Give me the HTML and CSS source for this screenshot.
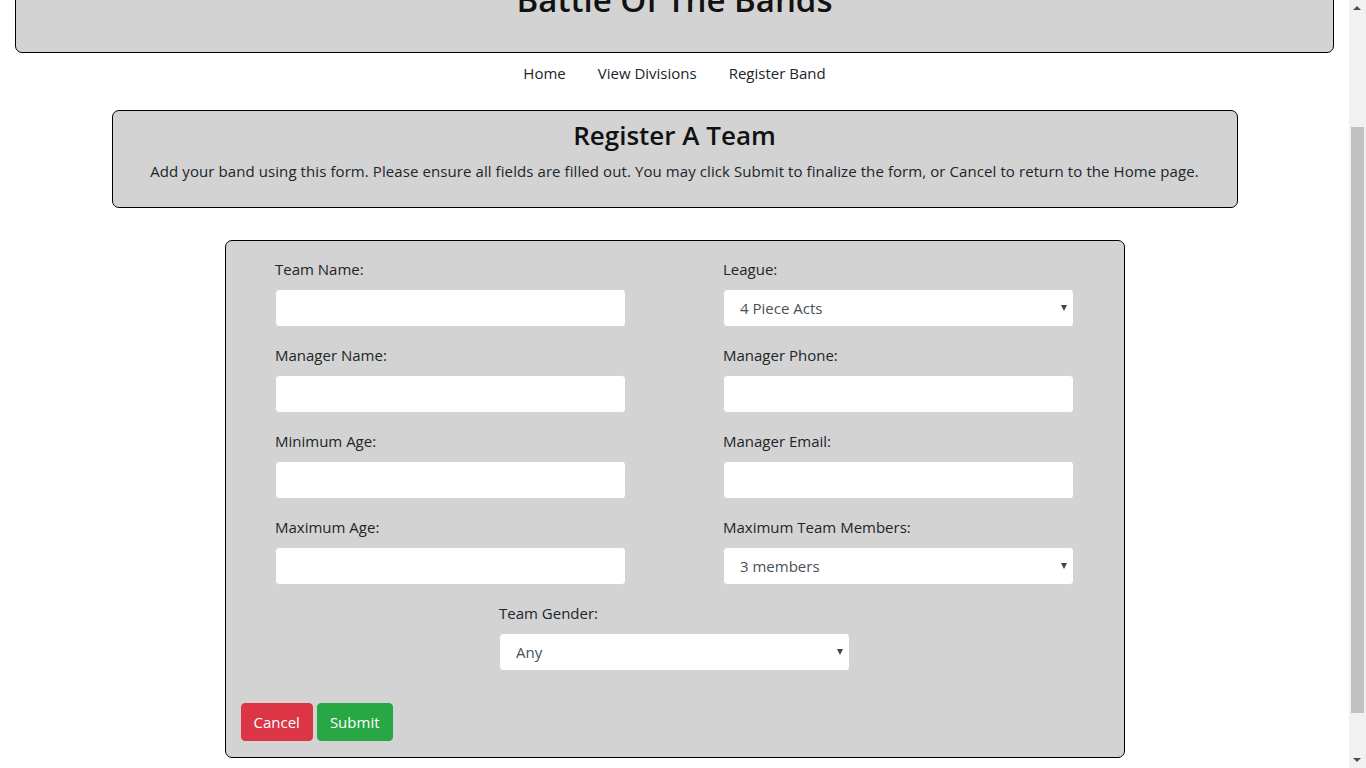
FILE: index.html
```html
<!DOCTYPE html>
<html lang="en">
<head>
<meta charset="utf-8">
<title>Battle Of The Bands - Register Band</title>
<link rel="stylesheet" href="styles.css">
</head>
<body>
<header class="site-header">
  <h1 class="site-title">Battle Of The Bands</h1>
</header>
<nav class="main-nav">
  <a class="nav-link" href="#">Home</a>
  <a class="nav-link" href="#">View Divisions</a>
  <a class="nav-link" href="#">Register Band</a>
</nav>
<main class="page">
  <section class="intro">
    <h3 class="intro-title">Register A Team</h3>
    <p class="intro-text">Add your band using this form. Please ensure all fields are filled out. You may click Submit to finalize the form, or Cancel to return to the Home page.</p>
  </section>
  <form class="team-form">
    <div class="fields">
      <div class="field">
        <label class="field-label" for="teamName">Team Name:</label>
        <input class="control" id="teamName" type="text">
      </div>
      <div class="field">
        <label class="field-label" for="league">League:</label>
        <span class="select-wrap"><select class="control select" id="league"><option>4 Piece Acts</option></select></span>
      </div>
      <div class="field">
        <label class="field-label" for="managerName">Manager Name:</label>
        <input class="control" id="managerName" type="text">
      </div>
      <div class="field">
        <label class="field-label" for="managerPhone">Manager Phone:</label>
        <input class="control" id="managerPhone" type="text">
      </div>
      <div class="field">
        <label class="field-label" for="minAge">Minimum Age:</label>
        <input class="control" id="minAge" type="text">
      </div>
      <div class="field">
        <label class="field-label" for="managerEmail">Manager Email:</label>
        <input class="control" id="managerEmail" type="text">
      </div>
      <div class="field">
        <label class="field-label" for="maxAge">Maximum Age:</label>
        <input class="control" id="maxAge" type="text">
      </div>
      <div class="field">
        <label class="field-label" for="maxMembers">Maximum Team Members:</label>
        <span class="select-wrap"><select class="control select" id="maxMembers"><option>3 members</option></select></span>
      </div>
      <div class="field field-center">
        <label class="field-label" for="gender">Team Gender:</label>
        <span class="select-wrap"><select class="control select" id="gender"><option>Any</option></select></span>
      </div>
    </div>
    <div class="actions">
      <button type="button" class="btn btn-cancel">Cancel</button>
      <button type="submit" class="btn btn-submit">Submit</button>
    </div>
  </form>
</main>
<div class="fake-scrollbar" aria-hidden="true">
  <span class="sb-arrow sb-up"></span>
  <span class="sb-track"><span class="sb-thumb"></span></span>
  <span class="sb-arrow sb-down"></span>
</div>
<script src="script.js"></script>
</body>
</html>
```

FILE: styles.css
```css
* {
  box-sizing: border-box;
}

html, body {
  margin: 0;
  padding: 0;
}

body {
  margin-right: 17px;
  font-family: "Open Sans", "Noto Sans", "Liberation Sans", sans-serif;
  font-size: 15px;
  line-height: 24px;
  color: #212529;
  background: #ffffff;
}

.site-header {
  margin: 0 15px;
  padding: 118px 0 28px;
  background: #d3d3d3;
  border: 1px solid #000;
  border-radius: 0 0 7px 7px;
  text-align: center;
}

.site-title {
  margin: 0;
  font-size: 33px;
  line-height: 48px;
  font-weight: 600;
  color: #111;
}

.main-nav {
  display: flex;
  justify-content: center;
}

.nav-link {
  display: block;
  padding: 8px 16px;
  color: #212529;
  text-decoration: none;
}

.page {
  padding-bottom: 60px;
}

.intro {
  width: 1126px;
  margin: 17px auto 0;
  padding: 8px 8px 10px;
  background: #d3d3d3;
  border: 1px solid #000;
  border-radius: 7px;
  text-align: center;
}

.intro-title {
  margin: 0 0 7px;
  font-size: 26px;
  line-height: 33px;
  font-weight: 600;
  color: #111;
}

.intro-text {
  margin: 0 0 14px;
  letter-spacing: 0.085px;
}

.team-form {
  width: 900px;
  margin: 32px auto 0;
  padding: 16px 15px 16px;
  background: #d3d3d3;
  border: 1px solid #000;
  border-radius: 7px;
}

.fields {
  display: grid;
  grid-template-columns: repeat(2, 351px);
  column-gap: 97px;
  row-gap: 16px;
  justify-content: center;
}

.field {
  display: flex;
  flex-direction: column;
}

.field-center {
  grid-column: 1 / -1;
  justify-self: center;
  width: 351px;
}

.field-label {
  margin-bottom: 8px;
  line-height: 24px;
}

.control {
  display: block;
  width: 100%;
  height: 38px;
  padding: 0 16px;
  border: 1px solid #d3d3d3;
  border-radius: 4px;
  background: #fff;
  font: inherit;
  color: #495057;
  outline: none;
}

.select-wrap {
  position: relative;
  display: block;
}

.select {
  -webkit-appearance: none;
  appearance: none;
}

.select-wrap::after {
  content: "";
  position: absolute;
  right: 7px;
  top: 16px;
  border-left: 3px solid transparent;
  border-right: 3px solid transparent;
  border-top: 6px solid #444;
  pointer-events: none;
}

.actions {
  display: flex;
  gap: 4px;
  margin-top: 32px;
}

.btn {
  height: 38px;
  padding: 0 12px;
  border: 1px solid transparent;
  border-radius: 4px;
  font: inherit;
  font-size: 15px;
  color: #fff;
  cursor: pointer;
}

.btn-cancel {
  background: #dc3545;
  border-color: #dc3545;
}

.btn-submit {
  background: #28a745;
  border-color: #28a745;
}

/* browser scrollbar drawn over the page edge */
.fake-scrollbar {
  position: fixed;
  top: 0;
  right: 0;
  width: 17px;
  height: 100vh;
  display: flex;
  flex-direction: column;
  background: #f1f1f1;
}

.sb-arrow {
  position: relative;
  display: block;
  height: 17px;
  flex: none;
}

.sb-arrow::after {
  content: "";
  position: absolute;
  left: 4px;
  width: 0;
  height: 0;
  border-left: 4px solid transparent;
  border-right: 4px solid transparent;
}

.sb-up::after {
  top: 6px;
  border-bottom: 4px solid #505050;
}

.sb-down::after {
  top: 7px;
  border-top: 4px solid #505050;
}

.sb-track {
  flex: 1;
  padding: 110px 2px 0;
}

.sb-thumb {
  display: block;
  height: 586px;
  background: #c1c1c1;
}
```

FILE: script.js
```js
window.scrollTo(0, 143);
window.addEventListener('load', function () {
  window.scrollTo(0, 143);
});
```
